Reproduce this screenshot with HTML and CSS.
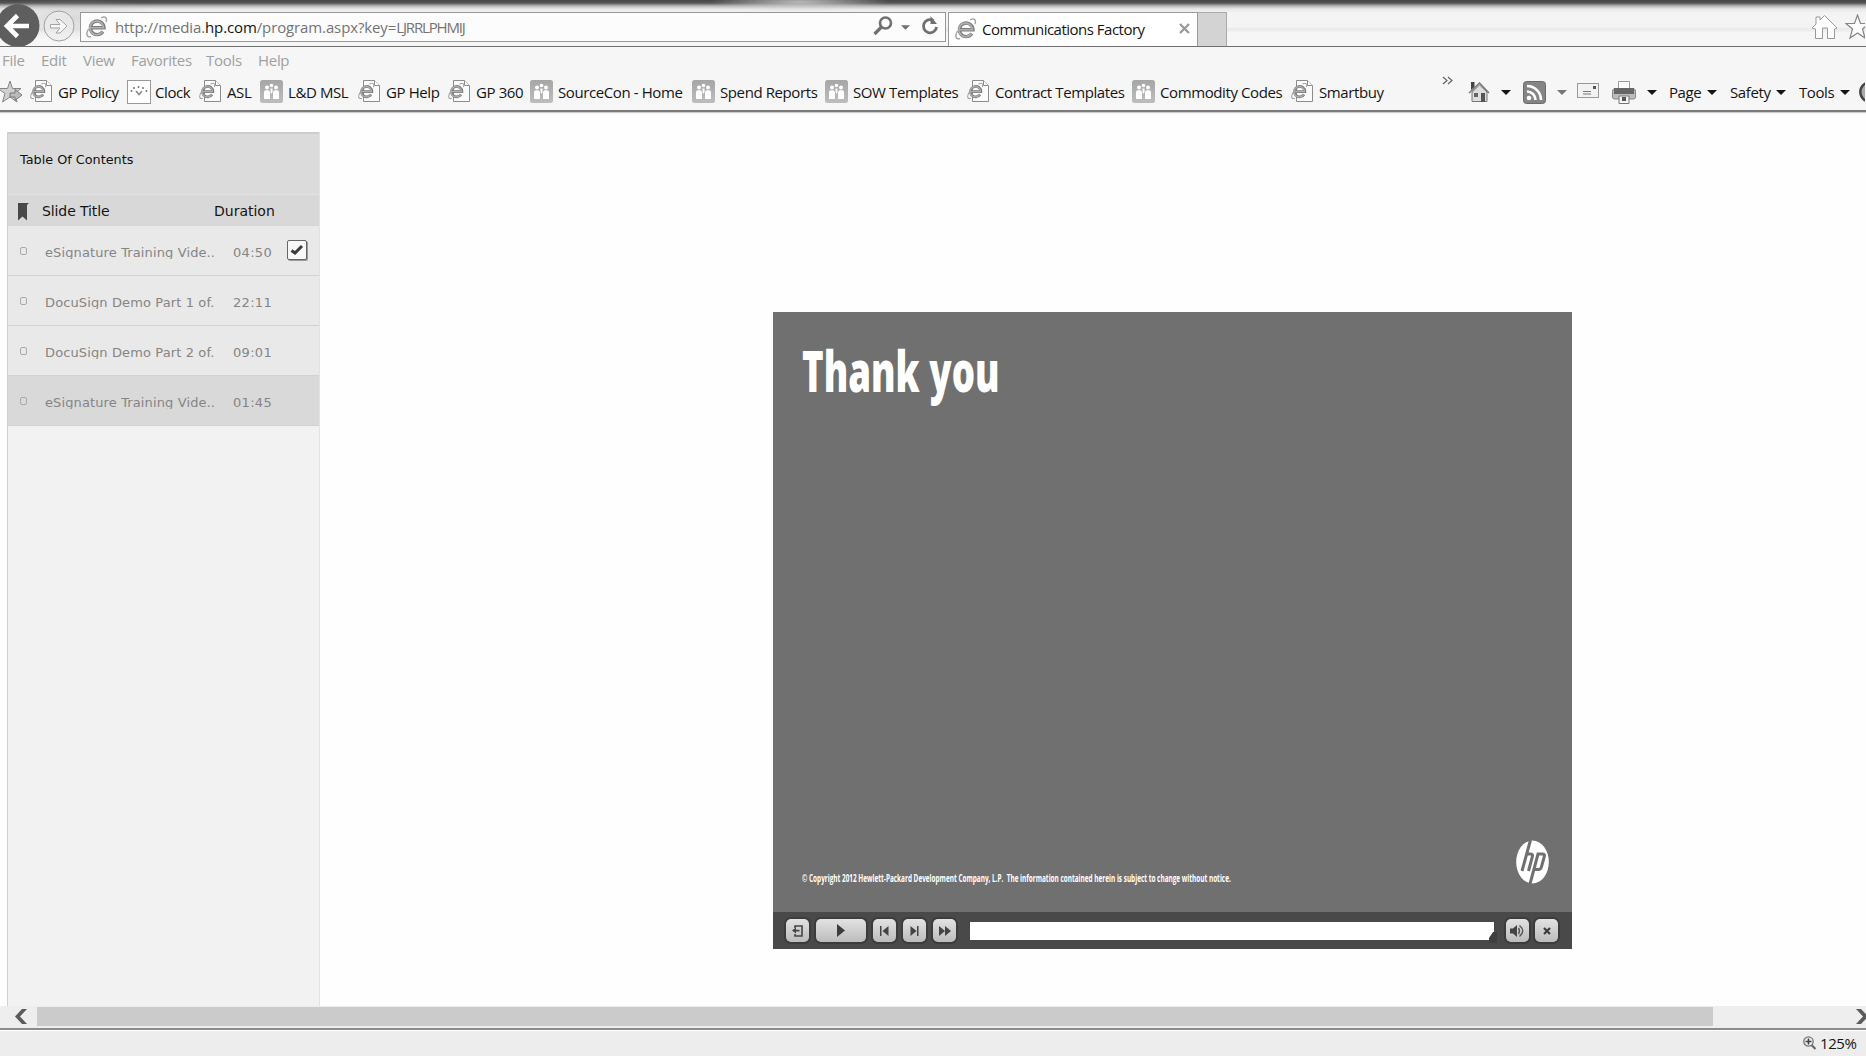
FILE: index.html
```html
<!DOCTYPE html>
<html lang="en">
<head>
<meta charset="utf-8">
<title>Communications Factory</title>
<link rel="stylesheet" href="styles.css">
</head>
<body>
<svg class="defs" width="0" height="0">
  <defs>
    <linearGradient id="tile" x1="0" y1="0" x2="0" y2="1"><stop offset="0" stop-color="#a6a6a6"/><stop offset="1" stop-color="#bdbdbd"/></linearGradient>
    <symbol id="ie" viewBox="0 0 22 22">
      <path d="M5 11.800H18A6.800 6.800 0 1 0 16.900 15.500" fill="none" stroke="#7d7d7d" stroke-width="3.400"/>
      <path d="M5 11.800H17.500A6.800 6.800 0 1 0 16.500 15.500" fill="none" stroke="#b0b0b0" stroke-width="1.600"/>
      <path d="M5 20.500C1 22 -.5 18.500 2.500 13M15 2C19-.5 21.500 1.500 20 6" fill="none" stroke="#a2a2a2" stroke-width="1.400"/>
    </symbol>
    <symbol id="page" viewBox="0 0 22 22">
      <path d="M5.500 .5H16.500L21.500 5.500V21.500H5.500Z" fill="#fbfbfb" stroke="#8d8d8d"/>
      <path d="M16.500 .5V5.500H21.500" fill="#fff" stroke="#8d8d8d"/>
      <use href="#ie" x="0" y="2.500" width="17" height="17"/>
    </symbol>
    <symbol id="people" viewBox="0 0 23 23">
      <rect width="23" height="23" rx="2.500" fill="url(#tile)"/>
      <g fill="#fff"><circle cx="7" cy="7.500" r="2"/><circle cx="16" cy="7.500" r="2"/><circle cx="11.500" cy="5.500" r="1.800"/>
      <path d="M4 12Q4 10.200 6 10.200H8.500L10 12V19H4ZM13 12L14.500 10.200H17Q19 10.200 19 12V19H13ZM10.500 8.500H12.500V12L11.500 14L10.500 12Z"/></g>
    </symbol>
    <symbol id="caret" viewBox="0 0 10 5"><path d="M0 0H10L5 5Z" fill="currentColor"/></symbol>
  </defs>
</svg>

<header class="chrome">
  <div class="navbar">
    <svg class="back" width="40" height="46" viewBox="0 0 40 46"><circle cx="18" cy="25.500" r="21.500" fill="#5e5e5e"/><path d="M29 26H7M17.500 15.500L7 26L17.500 36.500" fill="none" stroke="#fff" stroke-width="4.600"/></svg>
    <svg class="forward" width="32" height="32" viewBox="0 0 32 32"><circle cx="16" cy="16" r="15" fill="#ededed" fill-opacity=".7" stroke="#a0a0a0"/><path d="M7.500 14.500H17L13 9.500H17L24 16L17 23H13L17 18H7.500Z" fill="#f8f8f8" stroke="#a3a3a3"/></svg>
    <div class="address">
      <svg width="22" height="22"><use href="#ie" width="22" height="22"/></svg>
      <span class="url">http://media.<b>hp.com</b>/program.aspx?key=<i>LJRRLPHMIJ</i></span>
      <svg class="search" width="20" height="20" viewBox="0 0 20 20"><circle cx="12.500" cy="7" r="5.500" fill="none" stroke="#707070" stroke-width="2.600"/><path d="M8.500 11L1.500 18" stroke="#707070" stroke-width="3.200"/></svg>
      <svg class="grey-caret" width="9" height="5"><use href="#caret" width="9" height="5"/></svg>
      <svg class="reload" width="18" height="20" viewBox="0 0 18 20"><path d="M12.500 4.600A6.600 6.600 0 1 0 15.600 11" fill="none" stroke="#707070" stroke-width="2.800"/><path d="M9.500 0V8H16Z" fill="#707070"/></svg>
    </div>
    <div class="tab">
      <svg width="22" height="22"><use href="#ie" width="22" height="22"/></svg>
      <span class="tab-title">Communications Factory</span>
      <svg width="11" height="11" viewBox="0 0 11 11"><path d="M1 1L10 10M10 1L1 10" stroke="#999" stroke-width="2.300"/></svg>
    </div>
    <div class="new-tab"></div>
    <svg class="nav-home" width="27" height="26" viewBox="0 0 27 26"><path d="M1 14L5 10V3H9V6L13.500 1.500L26 14L23.500 15V24.500H16.500V14H11.500V24.500H4.500V15Z" fill="#fff" stroke="#999"/></svg>
    <svg class="nav-star" width="20" height="26" viewBox="0 0 20 26"><path d="M12.500 1L15.500 9.500H24L17.500 15L20 24L12.500 19L5 24L7.500 15L1 9.500H9.500Z" fill="#fff" stroke="#858585" stroke-width="1.200"/></svg>
  </div>

  <nav class="menu"><span>File</span><span>Edit</span><span>View</span><span>Favorites</span><span>Tools</span><span>Help</span></nav>

  <div class="favorites">
    <svg class="add-star" width="23" height="24" viewBox="0 0 23 24"><path d="M10 1L12.500 8.500H21L14.500 13.500L17 22L10 17L2.500 22L5 13.500L-2 8.500H7.500Z" fill="#d0d0d0" stroke="#858585"/><path d="M10 13H15V9.500L22 15L15 20.500V17H10Z" fill="#bbb" stroke="#777"/></svg>
    <a class="fav w97"><svg><use href="#page" width="22" height="22"/></svg><span>GP Policy</span></a>
    <a class="fav clock w72"><svg viewBox="0 0 24 24"><rect x=".5" y=".5" width="23" height="23" fill="#fff" stroke="#999"/><g fill="#777"><circle cx="4.500" cy="11" r="1"/><circle cx="7" cy="8" r="1"/><circle cx="11.500" cy="7" r="1"/><circle cx="16" cy="8" r="1"/><circle cx="19.500" cy="11" r="1"/></g><path d="M9 11L12 14.500L15 11" fill="none" stroke="#888" stroke-width="1.500"/></svg><span>Clock</span></a>
    <a class="fav w61"><svg><use href="#page" width="22" height="22"/></svg><span>ASL</span></a>
    <a class="fav w98"><svg><use href="#people" width="23" height="23"/></svg><span>L&amp;D MSL</span></a>
    <a class="fav w90"><svg><use href="#page" width="22" height="22"/></svg><span>GP Help</span></a>
    <a class="fav w82"><svg><use href="#page" width="22" height="22"/></svg><span>GP 360</span></a>
    <a class="fav w162"><svg><use href="#people" width="23" height="23"/></svg><span>SourceCon - Home</span></a>
    <a class="fav w133"><svg><use href="#people" width="23" height="23"/></svg><span>Spend Reports</span></a>
    <a class="fav w142"><svg><use href="#people" width="23" height="23"/></svg><span>SOW Templates</span></a>
    <a class="fav w165"><svg><use href="#page" width="22" height="22"/></svg><span>Contract Templates</span></a>
    <a class="fav w159"><svg><use href="#people" width="23" height="23"/></svg><span>Commodity Codes</span></a>
    <a class="fav w151"><svg><use href="#page" width="22" height="22"/></svg><span>Smartbuy</span></a>
    <svg class="more" width="12" height="10" viewBox="0 0 12 10"><path d="M1 1L5 4.500L1 8M6 1L10 4.500L6 8" fill="none" stroke="#666" stroke-width="1.200"/></svg>
    <div class="cmd w55">
      <svg width="22" height="22" viewBox="0 0 22 22"><path d="M4 11V20.500H19V11L11.500 4Z" fill="#ddd" stroke="#777"/><path d="M3 1H6.500V6L3 9Z" fill="#444"/><path d="M1 12L11.500 2L21 12" fill="none" stroke="#777" stroke-width="1.500"/><path d="M13 12H17V21H13Z" fill="#555"/><path d="M6 12H10V16H6Z" fill="#666"/></svg>
      <svg width="10" height="5"><use href="#caret" width="10" height="5"/></svg>
    </div>
    <div class="cmd w54 feed">
      <svg width="23" height="23" viewBox="0 0 23 23"><rect x=".5" y=".5" width="22" height="22" rx="3" fill="#858585" stroke="#6b6b6b"/><circle cx="6" cy="17" r="2.300" fill="#fff"/><path d="M4 10.500A8.500 8.500 0 0 1 12.500 19M4 5A14 14 0 0 1 18 19" fill="none" stroke="#fff" stroke-width="2.600"/></svg>
      <svg width="10" height="5"><use href="#caret" width="10" height="5"/></svg>
    </div>
    <svg class="mail" width="22" height="16" viewBox="0 0 22 16"><rect x=".5" y=".5" width="21" height="14" fill="#f2f2f2" stroke="#999"/><path d="M6 8.500H14M6 11H14" stroke="#777"/><rect x="16" y="3" width="3" height="3" fill="#555"/></svg>
    <div class="cmd w57 printer">
      <svg width="24" height="23" viewBox="0 0 24 23"><path d="M6.500 .5H17.500V9H6.500Z" fill="#fff" stroke="#999"/><rect x=".5" y="8" width="23" height="10" rx="2" fill="#bbb" stroke="#888"/><rect x="2" y="7" width="20" height="6" fill="#666"/><path d="M7 15H17V22.500H7Z" fill="#f4f4f4" stroke="#777"/><path d="M10 16H14V20H10Z" fill="#555"/></svg>
      <svg width="10" height="5"><use href="#caret" width="10" height="5"/></svg>
    </div>
    <div class="cmd w61 text"><span>Page</span><svg width="10" height="5"><use href="#caret" width="10" height="5"/></svg></div>
    <div class="cmd w69 text"><span>Safety</span><svg width="10" height="5"><use href="#caret" width="10" height="5"/></svg></div>
    <div class="cmd w60 text"><span>Tools</span><svg width="10" height="5"><use href="#caret" width="10" height="5"/></svg></div>
    <svg width="6" height="22" viewBox="0 0 6 22"><circle cx="11" cy="11" r="9.700" fill="#aaa" stroke="#444" stroke-width="2.400"/></svg>
  </div>
</header>

<main class="content">
  <aside class="toc">
    <h1>Table Of Contents</h1>
    <div class="toc-head">
      <svg width="13" height="19" viewBox="0 0 13 19"><path d="M1 1H12L10 3V18.500L5.500 14.500L1 18.500Z" fill="#484848"/></svg>
      <span class="col-title">Slide Title</span><span>Duration</span>
    </div>
    <div class="slide"><i class="dot"></i><span class="title">eSignature Training Vide..</span><span class="time">04:50</span><b class="check"><svg width="14" height="12" viewBox="0 0 14 12"><path d="M1.500 6.500L5 9L12 2" fill="none" stroke="#3c3c3c" stroke-width="3"/></svg></b></div>
    <div class="slide"><i class="dot"></i><span class="title">DocuSign Demo Part 1 of.</span><span class="time">22:11</span></div>
    <div class="slide"><i class="dot"></i><span class="title">DocuSign Demo Part 2 of.</span><span class="time">09:01</span></div>
    <div class="slide current"><i class="dot"></i><span class="title">eSignature Training Vide..</span><span class="time">01:45</span></div>
  </aside>

  <section class="player">
    <div class="stage">
      <h2>Thank you</h2>
      <div class="foot">
        <p>© Copyright 2012 Hewlett-Packard Development Company, L.P.&nbsp; The information contained herein is subject to change without notice.</p>
        <svg class="logo" width="33" height="44" viewBox="0 0 33 44"><ellipse cx="16.500" cy="22" rx="16.300" ry="21.500" fill="#fff"/><g fill="none" stroke="#707070" stroke-width="3"><path d="M14.500 0L6 31M10.500 14H14.500Q17 14 16.400 16.500L12.500 31M14 44L22 14H26.500Q29 14 28.300 16.500L25.400 27Q24.800 29.500 22.500 29.500H18"/></g></svg>
      </div>
    </div>
    <div class="controls">
      <span class="btn"><svg width="11" height="12" viewBox="0 0 11 12"><path d="M3 3V1H10V11H3V9" fill="none" stroke="#444" stroke-width="1.600"/><path d="M0 5.500L4 2.500V4.800H7.500V6.500H4V8.500Z" fill="#444"/></svg></span>
      <span class="btn play"><svg width="8" height="13"><path d="M0 0L8 6.500L0 13Z" fill="#3c3c3c"/></svg></span>
      <span class="btn"><svg width="9" height="10"><path d="M0 0H1.500V10H0ZM8.500 0V10L2.500 5Z" fill="#444"/></svg></span>
      <span class="btn"><svg width="9" height="10"><path d="M7 0H8.500V10H7ZM.5 0V10L6.500 5Z" fill="#444"/></svg></span>
      <span class="btn"><svg width="12" height="10"><path d="M0 0L6 5L0 10ZM6 0L12 5L6 10Z" fill="#444"/></svg></span>
      <div class="track"><svg width="8" height="11"><path d="M0 11V6L4 0H8V11Z" fill="#3e3e3e"/></svg></div>
      <span class="btn"><svg width="15" height="14" viewBox="0 0 15 14"><path d="M0 4.500H3L7 1V13L3 9.500H0Z" fill="#444"/><path d="M8.500 4Q10.500 7 8.500 10M9.500 1.500Q16 7 9.500 12.500" fill="none" stroke="#555" stroke-width="1.400"/></svg></span>
      <span class="btn close"><svg width="8" height="8" viewBox="0 0 8 8"><path d="M1 1L7 7M7 1L1 7" stroke="#3c3c3c" stroke-width="2.200"/></svg></span>
    </div>
  </section>
</main>

<div class="scrollbar">
  <svg width="12" height="15" viewBox="0 0 12 15"><path d="M7 0H12L5 7.500L12 15H7L0 7.500Z" fill="#5b5b5b"/></svg>
  <div class="thumb"></div>
  <svg width="10" height="15" viewBox="0 0 10 15"><path d="M0 0H5L12 7.500L5 15H0L7 7.500Z" fill="#5b5b5b"/></svg>
</div>
<footer class="status">
  <svg width="13" height="14" viewBox="0 0 13 14"><circle cx="5.500" cy="5.500" r="4.700" fill="#eee" stroke="#777" stroke-width="1.300"/><path d="M5.500 2.500V8.500M2.500 5.500H8.500" stroke="#444" stroke-width="1.600"/><path d="M8.500 9L12.500 13" stroke="#666" stroke-width="2.200"/></svg>
  <span>125%</span>
</footer>
</body>
</html>
```
FILE: styles.css
```css
* { box-sizing: border-box; }
body { margin: 0; width: 1866px; height: 1056px; overflow: hidden; display: flex; flex-direction: column; background: #fefefe; font-family: "Open Sans", "Noto Sans", sans-serif; font-size: 15px; color: #151515; }
svg { flex: none; display: block; }
.defs { position: absolute; }

.chrome { flex: none; height: 112px; background: #f6f6f6; border-bottom: 2px solid #7b7b7b; box-shadow: 0 1px 1px #ccc; }
.navbar { height: 47px; display: flex; align-items: flex-start; border-bottom: 1px solid #6f6f6f;
  background: radial-gradient(ellipse 90px 10px at 800px 2px, rgba(210,210,210,.8), transparent), radial-gradient(ellipse 90px 22px at 70px 18px, rgba(175,175,175,.4), transparent), linear-gradient(#454545 0, #555 3px, #b8b8b8 6px, #e8e8e8 9px, #f4f4f4 13px, #f4f4f4 27px, #e9e9e9 29px, #f6f6f6 33px, #f6f6f6 100%); }
.forward { margin: 10px 5px 0 3px; }
.address { width: 866px; height: 30px; margin-top: 12px; border: 1px solid #979797; background: #fcfcfc; display: flex; align-items: center; padding-left: 5px; }
.url { width: 758px; margin-left: 7px; color: #747474; letter-spacing: -.12px; white-space: nowrap; }
.url b { font-weight: 400; color: #111; }
.url i { font-style: normal; letter-spacing: -1.150px; }
.search { margin-top: -2px; }
.grey-caret { color: #707070; margin: 0 11px 0 8px; }
.reload { margin-top: -3px; }
.tab { width: 250px; height: 34px; margin: 12px 0 0 2px; border: 1px solid #9a9a9a; border-bottom: 0; background: #fff; display: flex; align-items: center; padding-left: 6px; }
.tab svg { margin-top: -2px; }
.tab-title { width: 197px; margin: -2px 0 0 5px; letter-spacing: -.5px; white-space: nowrap; }
.new-tab { width: 29px; height: 34px; margin-top: 12px; background: #d3d3d3; border: 1px solid #aaa; border-left: 0; border-bottom: 0; }
.nav-home { margin: 14px 7px 0 584px; }
.nav-star { margin-top: 14px; }

.menu { height: 28px; display: grid; grid-template-columns: 39px 42px 48px 75px 52px 60px; padding: 1px 0 0 2px; line-height: 24px; color: #a0a0a0; letter-spacing: -.3px; }
.favorites { height: 34px; display: flex; align-items: center; white-space: nowrap; line-height: 34px; letter-spacing: -.4px; }
.add-star { margin-right: 7px; }
.fav { flex: none; display: flex; align-items: center; height: 34px; }
.fav svg { width: 23px; height: 23px; margin: -1px 5px 0 0; }
.clock svg { width: 24px; height: 24px; margin-right: 4px; }
.w54 { width: 54px; } .w55 { width: 55px; } .w57 { width: 57px; } .w60 { width: 60px; } .w61 { width: 61px; } .w69 { width: 69px; }
.w72 { width: 72px; } .w82 { width: 82px; } .w90 { width: 90px; } .w97 { width: 97px; } .w98 { width: 98px; } .w133 { width: 133px; }
.w142 { width: 142px; } .w151 { width: 151px; } .w159 { width: 159px; } .w162 { width: 162px; } .w165 { width: 165px; }
.more { margin: 0 14px 22px 0; }
.cmd { flex: none; display: flex; align-items: center; justify-content: space-between; padding-right: 12px; }
.feed svg + svg { color: #777; }
.feed { padding-right: 10px; }
.mail { margin: -2px 13px 0 0; }
.text { padding-right: 13px; }
.text:nth-last-child(2) { padding-right: 9px; }

.content { flex: none; height: 894px; display: flex; align-items: flex-start; padding-left: 7px; }
.toc { width: 313px; height: 874px; margin-top: 20px; background: #f2f2f2; border: 1px solid #d0d0d0; border-width: 0 1px; border-right-color: #e2e2e2; font-family: "DejaVu Sans", sans-serif; }
.toc h1 { margin: 0; height: 62px; padding: 18px 0 0 12px; border-top: 2px solid #cdcdcd; background: #dbdbdb; font-size: 12.800px; line-height: 16px; font-weight: 400; color: #111; }
.toc-head { height: 32px; display: flex; align-items: center; padding: 1px 0 0 9px; border-top: 1px solid #e2e2e2; background: #d8d8d8; font-size: 14px; }
.col-title { width: 172px; margin-left: 12px; letter-spacing: -.1px; }
.slide { height: 50px; display: flex; align-items: center; padding: 2px 0 0 12px; background: #e9e9e9; border-bottom: 1px solid #d2d2d2; color: #858585; font-size: 13px; letter-spacing: .3px; white-space: nowrap; }
.dot { width: 7px; height: 8px; border: 1px solid #aaa; border-radius: 2px; margin-top: -2px; }
.title { width: 175px; height: 15px; line-height: 18px; overflow: hidden; margin-left: 18px; letter-spacing: .12px; }
.time { width: 38px; margin-left: 13px; line-height: 18px; margin-top: 2px; }
.check { width: 20px; height: 20px; margin: -3px 0 0 16px; padding: 3px 0 0 2px; background: #f8f8f8; border: 1px solid #666; border-radius: 2px; box-shadow: 1px 1px #999; }
.current { background: #d9d9d9; }

.player { width: 799px; height: 637px; margin: 200px 0 0 453px; }
.stage { height: 600px; display: flex; flex-direction: column; justify-content: space-between; background: #707070; color: #fff; padding: 25px 23px 28px 29px; }
.stage h2 { margin: 0; font-size: 57px; line-height: 66px; font-weight: 800; white-space: nowrap; transform: scaleX(.643); transform-origin: 0 0; }
.foot { display: flex; justify-content: space-between; align-items: flex-end; }
.foot p { width: 430px; margin: 0 0 -2px; font-size: 10px; line-height: 16px; font-weight: 700; white-space: nowrap; transform: scaleX(.642); transform-origin: 0 0; }
.controls { height: 37px; display: flex; align-items: center; gap: 7px; padding-left: 13px; background: #494949; }
.btn { width: 23px; height: 23px; display: flex; align-items: center; justify-content: center; border-radius: 5px; background: linear-gradient(#e2e2e2, #bcbcbc); box-shadow: 0 0 0 2px #3c3c3c; }
.play { width: 50px; }
.track { width: 524px; height: 18px; margin: 0 5px 0 7px; background: #fff; display: flex; justify-content: flex-end; align-items: flex-start; }
.track svg { margin: 10px -3px 0 0; }
.close { margin-left: -1px; }

.scrollbar { flex: none; height: 24px; display: flex; align-items: flex-start; background: #eee; border-bottom: 2px solid #8b8b8b; padding: 1px 0 0 15px; }
.scrollbar svg { margin-top: 2px; }
.thumb { width: 1676px; height: 19px; margin: 0 143px 0 10px; background: #cbcbcb; }
.status { flex: 1; display: flex; align-items: center; border-top: 1px solid #fff; background: #ededed; padding: 0 0 1px 1803px; }
.status span { margin-left: 4px; letter-spacing: -.4px; }
```
